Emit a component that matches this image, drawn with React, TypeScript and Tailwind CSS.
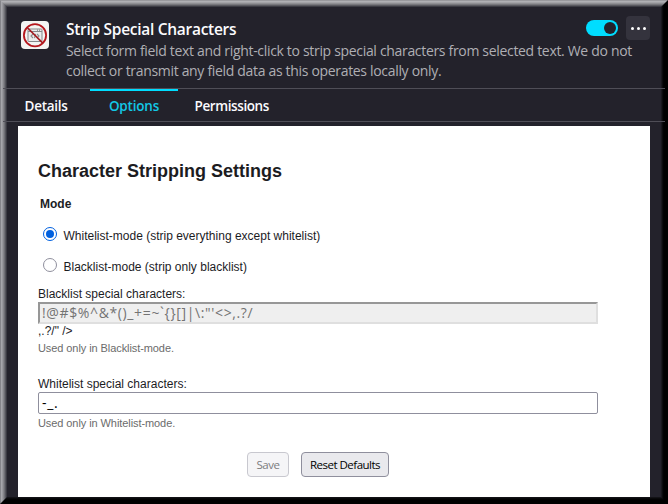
import React from "react";

const bevel = [
  "border-t-[#99999d] border-l-[#85858a] border-r-black border-b-black",
  "border-t-[#b0b0b4] border-l-[#a6a6ab] border-r-black border-b-black",
  "border-t-[#a3a3a7] border-l-[#98989d] border-r-black border-b-black",
  "border-t-[#8f8f93] border-l-[#85858a] border-r-black border-b-black",
  "border-t-[#77777c] border-l-[#6f6f75] border-r-[#020203] border-b-[#020203]",
  "border-t-[#5a5a60] border-l-[#55555c] border-r-[#0b0b0e] border-b-[#08080a]",
  "border-t-[#3c3c44] border-l-[#3a3a42] border-r-[#18181d] border-b-[#121216]",
];

function Frame({ level, children }: { level: number; children: React.ReactNode }) {
  if (level === bevel.length) return <>{children}</>;
  return (
    <div className={`h-full w-full border ${bevel[level]}`}>
      <Frame level={level + 1}>{children}</Frame>
    </div>
  );
}

function Logo() {
  return (
    <svg width="28" height="28" viewBox="0 0 28 28" className="block">
      <rect width="28" height="28" rx="4" fill="#f3f4f2" />
      <rect x="7" y="8" width="14" height="12.5" rx="0.8" fill="#ececec" stroke="#85898b" strokeWidth="1" />
      <path d="M7 10.5H21" stroke="#85898b" strokeWidth="1" />
      <path d="M16 9.2h1m1 0h1" stroke="#555" strokeWidth="0.8" />
      <path d="M12 13l-2 2 2 2M16 13l2 2-2 2M14.5 12.8l-1 4.4" fill="none" stroke="#8d8d8d" strokeWidth="1.1" />
      <circle cx="14" cy="14.3" r="11.1" fill="none" stroke="#b5171d" strokeWidth="1.8" />
      <path d="M6.2 6.5l15.6 15.6" stroke="#a31a1e" strokeWidth="1.6" />
    </svg>
  );
}

function Radio({ checked, label }: { checked?: boolean; label: string }) {
  return (
    <label className="flex h-[14px] items-center">
      <span
        className={`flex size-[14px] shrink-0 items-center justify-center rounded-full border bg-white ${
          checked ? "border-[#0060df]" : "border-[#8f8f9d]"
        }`}
      >
        {checked && <span className="size-2 rounded-full bg-[#0060df]" />}
      </span>
      <span className="ml-[6.5px] whitespace-nowrap pt-[3px] text-[12px] leading-[14px]">{label}</span>
    </label>
  );
}

export default function App() {
  return (
    <div className="h-[504px] w-[668px] overflow-hidden bg-[#23222b]">
      <Frame level={0}>
        <div className="flex h-full flex-col bg-[#23222b] font-['Open_Sans','Noto_Sans',sans-serif]">
          <header className="flex h-[81px] shrink-0 pl-[14px]">
            <div className="mt-[14px] w-7">
              <Logo />
            </div>
            <div className="ml-[17px] w-[587px]">
              <div className="flex h-[33px]">
                <h1 className="mt-[11px] flex-1 whitespace-nowrap text-[15.5px] font-semibold leading-[22px] tracking-[-0.29px] text-[#fbfbfe]">
                  Strip Special Characters
                </h1>
                <div className="mt-[13px] flex h-4 w-8 justify-end rounded-full bg-[#00ddff] p-[2px]">
                  <span className="size-3 rounded-full bg-[#23222b]" />
                </div>
                <div className="mr-[3px] ml-2 mt-[9px] flex h-6 w-6 items-center justify-center gap-[3px] rounded bg-[#34333d]">
                  <span className="size-[3px] rounded-full bg-white" />
                  <span className="size-[3px] rounded-full bg-white" />
                  <span className="size-[3px] rounded-full bg-white" />
                </div>
              </div>
              <p className="mt-[1px] whitespace-nowrap text-[14px] leading-[20px] tracking-[-0.32px] text-[#afafb4]">
                <span className="block">Select form field text and right-click to strip special characters from selected text. We do not</span>
                <span className="block">collect or transmit any field data as this operates locally only.</span>
              </p>
            </div>
          </header>
          <nav className="-mx-1 flex h-[34px] shrink-0 border-y border-[#4f4e57] pl-[6px] text-[13.5px] font-semibold leading-[20px] text-[#fbfbfe]">
            <span className="w-[81px] pl-[15.5px] pt-[7px] tracking-[-0.25px]">Details</span>
            <span className="w-[88px] border-t-2 border-[#00ddff] pt-[5px] text-center tracking-[-0.2px] text-[#12c8e6]">Options</span>
            <span className="pl-[16.5px] pt-[7px] tracking-[-0.4px]">Permissions</span>
          </nav>
          <main className="ml-[11px] mt-[4px] h-[371px] w-[632px] shrink-0 bg-white pl-5 font-['Liberation_Sans',Arial,sans-serif] text-[12px] leading-[14px] text-[#1c1c1f]">
            <h2 className="pt-[34px] text-[18px] font-bold leading-[22px]">Character Stripping Settings</h2>
            <h3 className="ml-[2px] mt-[15px] text-[12px] font-bold">Mode</h3>
            <div className="ml-[5px] mt-[16px] flex flex-col gap-[17px]">
              <Radio checked label="Whitelist-mode (strip everything except whitelist)" />
              <Radio label="Blacklist-mode (strip only blacklist)" />
            </div>
            <p className="mt-[15px]">Blacklist special characters:</p>
            <div className="mt-px h-[22px] w-[560px] whitespace-pre border-2 border-[#dfdfdf] border-l-[#979797] border-t-[#979797] bg-[#efefef] pl-[2px] font-['Open_Sans','Noto_Sans',sans-serif] text-[14px] leading-[18px] tracking-[0.63px] text-[#737373]">
              {"!@#$%^&*()_+=~`{}[]|\\:\"'<>,.?/"}
            </div>
            <p>{",.?/\" />"}</p>
            <p className="mt-[4px] text-[11px] leading-[13px] tracking-[-0.08px] text-[#6b6b6b]">Used only in Blacklist-mode.</p>
            <p className="mt-[22px]">Whitelist special characters:</p>
            <div className="mt-[1px] h-[22px] w-[560px] rounded-[2px] border border-[#8f8f9d] bg-white pl-[3px] font-['Open_Sans','Noto_Sans',sans-serif] text-[14px] leading-[19px] tracking-[0.7px] text-black">
              -_.
            </div>
            <p className="mt-[3px] text-[11px] leading-[13px] tracking-[-0.08px] text-[#6b6b6b]">Used only in Whitelist-mode.</p>
            <div className="ml-[209px] mt-[22px] flex gap-3 font-['Open_Sans','Noto_Sans',sans-serif] text-[11.5px] leading-[22px] tracking-[-0.5px] text-black">
              <button className="h-[25px] w-[42px] rounded border border-[#c8c8cf] bg-[#f5f5f7] text-[#7c7c7e]">Save</button>
              <button className="h-[25px] w-[88px] whitespace-nowrap rounded border border-[#8f8f9d] bg-[#e9e9ed]">Reset Defaults</button>
            </div>
          </main>
        </div>
      </Frame>
    </div>
  );
}
